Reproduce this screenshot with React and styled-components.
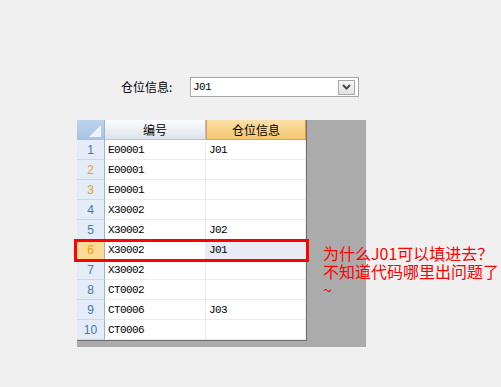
import React from "react";
import styled, { createGlobalStyle } from "styled-components";

const Global = createGlobalStyle`
  html, body { margin: 0; padding: 0; background: #f0f0f0; }
  body { font-family: "Liberation Mono", "Noto Sans CJK SC", monospace; font-size: 12px; color: #000; }
`;

const Page = styled.div`
  position: relative;
  width: 501px;
  height: 387px;
  padding: 77px 0 0 0;
  box-sizing: border-box;
`;

const FormRow = styled.div`
  display: flex;
  align-items: center;
  padding-left: 121px;
  height: 20px;
`;

const Label = styled.span`
  font-family: "Noto Sans CJK SC", sans-serif;
  font-size: 12px;
  width: 69px;
  line-height: 20px;
`;

const Combo = styled.div`
  box-sizing: border-box;
  width: 169px;
  height: 20px;
  background: #fff;
  border: 1px solid #a4a4a4;
  display: flex;
  align-items: center;
  justify-content: space-between;
  padding: 0 3px 0 2px;
`;

const ComboText = styled.span`
  font-family: "Liberation Mono", monospace;
  font-size: 11px;
  letter-spacing: -0.6px;
`;

const DropBtn = styled.div`
  box-sizing: border-box;
  width: 17px;
  height: 15px;
  border: 1px solid #a8a8a8;
  background: linear-gradient(#f6f6f6, #e2e2e2);
  display: flex;
  align-items: center;
  justify-content: center;
`;

const Panel = styled.div`
  margin: 23px 0 0 77px;
  width: 289px;
  height: 227px;
  background: #ababab;
`;

const Grid = styled.div`
  box-sizing: border-box;
  width: 230px;
  display: grid;
  grid-template-columns: 28px 101px 100px;
  border-right: 1px solid #6e6e6e;
  border-bottom: 1px solid #6e6e6e;
  background: #fff;
`;

const Corner = styled.div`
  position: relative;
  height: 20px;
  background: linear-gradient(#bcd3ec, #a9c3e3);
  border-right: 1px solid #9bb5d6;
  box-sizing: border-box;
`;

const CornerTri = styled.div`
  position: absolute;
  right: 3px;
  bottom: 3px;
  width: 0;
  height: 0;
  border-left: 12px solid transparent;
  border-bottom: 12px solid #eef3fa;
`;

const ColHead = styled.div`
  height: 20px;
  box-sizing: border-box;
  display: flex;
  align-items: center;
  justify-content: center;
  font-family: "Noto Sans CJK SC", sans-serif;
  font-size: 12px;
  background: ${p => p.active
    ? "linear-gradient(#fbe0a8, #f5c66f)"
    : "linear-gradient(#fbfcfd, #dde3ec)"};
  border-right: 1px solid ${p => p.active ? "#f09a3a" : "#a8bdd8"};
  border-bottom: 1px solid ${p => p.active ? "#f09a3a" : "#b9c6d8"};
  ${p => p.active && "border-left: 1px solid #f09a3a;"}
`;

const RowHead = styled.div`
  height: 20px;
  box-sizing: border-box;
  display: flex;
  align-items: center;
  justify-content: center;
  font-family: "Liberation Sans", sans-serif;
  font-size: 12px;
  color: ${p => p.hl ? "#f0a000" : "#3c78b4"};
  background: ${p => p.current ? "#ffd996" : "#e4ecf7"};
  border-right: 1px solid #9bb5d6;
  border-bottom: 1px solid #c8d6e8;
`;

const Cell = styled.div`
  height: 20px;
  box-sizing: border-box;
  display: flex;
  align-items: center;
  padding-left: 3px;
  font-family: "Liberation Mono", monospace;
  font-size: 11px;
  letter-spacing: -0.6px;
  background: ${p => p.sel ? "#e8ebf3" : "#fff"};
  border-right: 1px solid #ececec;
  border-bottom: 1px solid #ececec;
`;

const RedBox = styled.div`
  position: absolute;
  left: 74px;
  top: 239px;
  width: 235px;
  height: 23px;
  box-sizing: border-box;
  border: 3px solid #ff0000;
`;

const Note = styled.div`
  position: absolute;
  left: 323px;
  top: 244px;
  color: #ff0000;
  font-family: "Noto Sans CJK SC", sans-serif;
  font-size: 16px;
  line-height: 18px;
  white-space: pre;
`;

const rows = [
  ["E00001", "J01"],
  ["E00001", ""],
  ["E00001", ""],
  ["X30002", ""],
  ["X30002", "J02"],
  ["X30002", "J01"],
  ["X30002", ""],
  ["CT0002", ""],
  ["CT0006", "J03"],
  ["CT0006", ""],
];
const orange = new Set([2, 3, 6]);

export default function App() {
  return (
    <Page>
      <Global />
      <FormRow>
        <Label>仓位信息:</Label>
        <Combo>
          <ComboText>J01</ComboText>
          <DropBtn>
            <svg width="9" height="6" viewBox="0 0 9 6">
              <path d="M1 1 L4.5 4.5 L8 1" fill="none" stroke="#4a4a4a" strokeWidth="2" />
            </svg>
          </DropBtn>
        </Combo>
      </FormRow>
      <Panel>
        <Grid>
          <Corner><CornerTri /></Corner>
          <ColHead>编号</ColHead>
          <ColHead active>仓位信息</ColHead>
          {rows.map((r, i) => (
            <React.Fragment key={i}>
              <RowHead hl={orange.has(i + 1)} current={i === 5}>{i + 1}</RowHead>
              <Cell>{r[0]}</Cell>
              <Cell sel={i === 5}>{r[1]}</Cell>
            </React.Fragment>
          ))}
        </Grid>
      </Panel>
      <RedBox />
      <Note>{"为什么J01可以填进去？\n不知道代码哪里出问题了\n~"}</Note>
    </Page>
  );
}
